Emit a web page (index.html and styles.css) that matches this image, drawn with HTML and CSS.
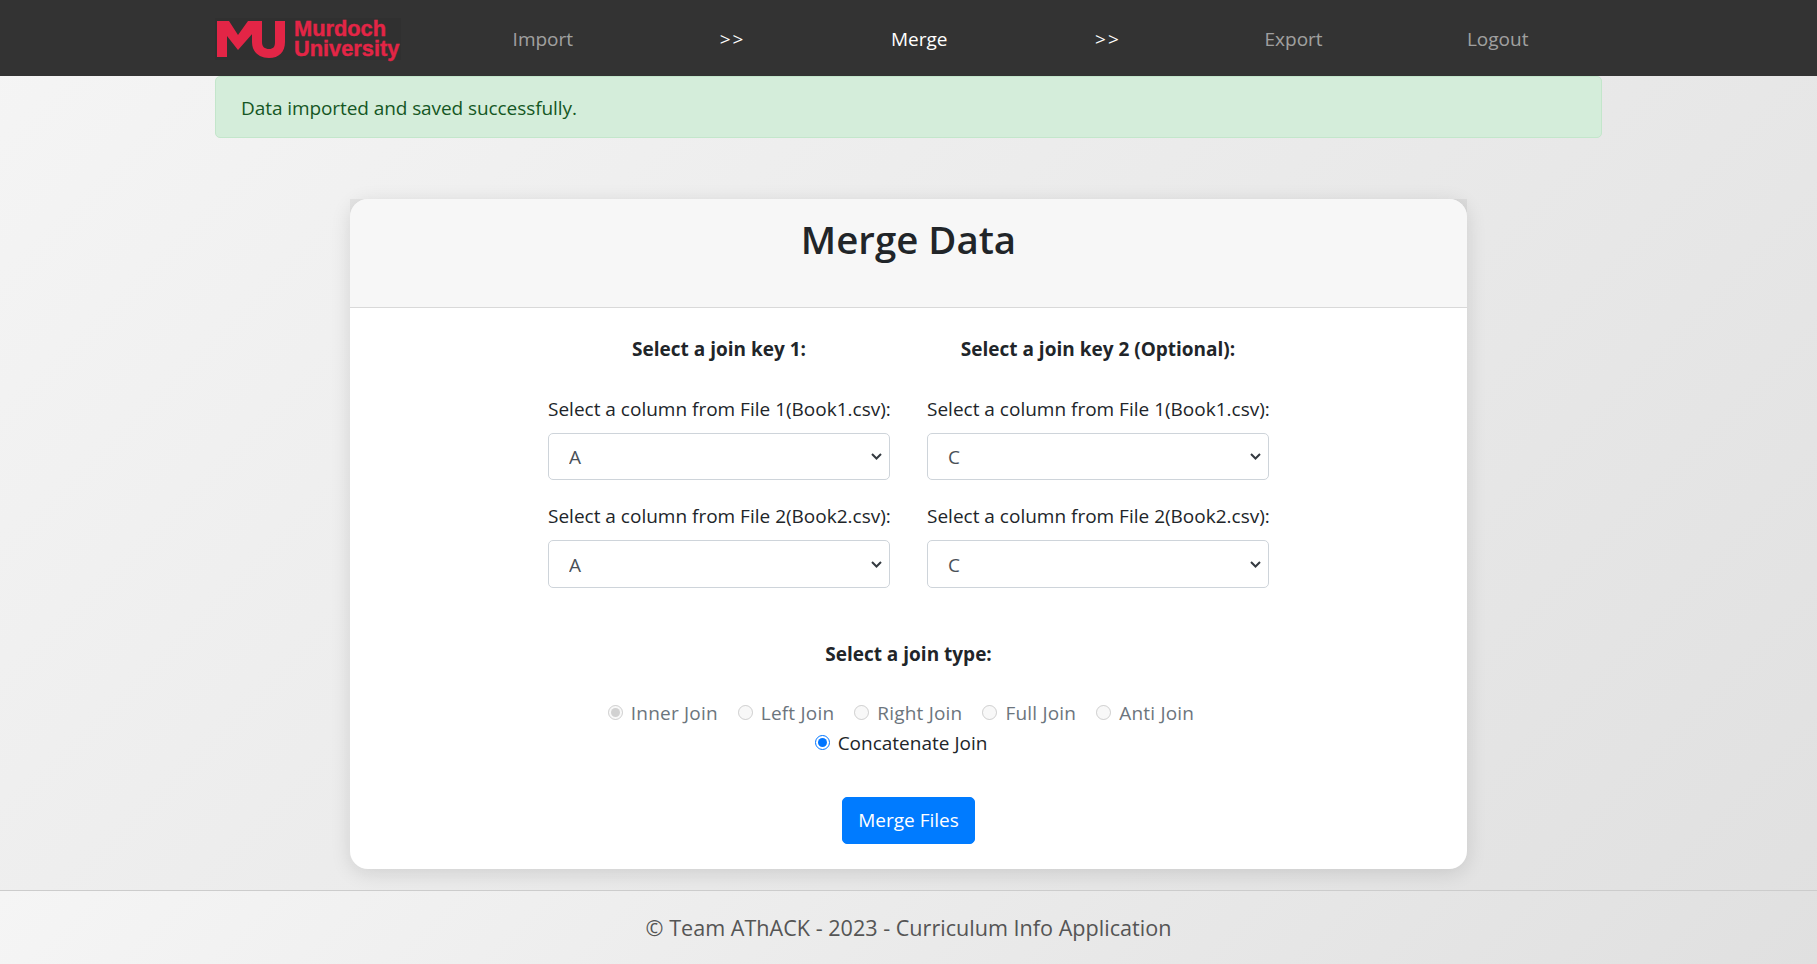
FILE: index.html
```html
<!DOCTYPE html>
<html lang="en">
  <head>
    <meta charset="UTF-8" />
    <title>Merge Data</title>
    <link rel="stylesheet" href="styles.css">
  </head>
  <body>
    <nav class="navbar">
      <div class="nav-inner">
        <div class="brand-cell">
          <a class="brand" href="#">
            <svg class="brand-mark" viewBox="0 0 68 37" aria-hidden="true">
              <path d="M0 0H12L21 14L31 0H36V12L21 29L10 15V36H0Z" />
              <path d="M35 0H45V21C45 26 48 28 52 28C56 28 58 26 58 21V0H68V21C68 31 62 37 52 37C42 37 35 31 35 21Z" />
            </svg>
            <span class="brand-text">Murdoch<br />University</span>
          </a>
        </div>
        <ul class="nav-links">
          <li><a href="#">Import</a></li>
          <li class="sep">&gt;&gt;</li>
          <li class="current"><a class="active" href="#">Merge</a></li>
          <li class="sep">&gt;&gt;</li>
          <li><a href="#">Export</a></li>
          <li class="logout"><a href="#">Logout</a></li>
        </ul>
      </div>
    </nav>

    <main class="content">
      <div class="alert">Data imported and saved successfully.</div>

      <section class="card">
        <div class="card-top">
          <div class="card-header">
            <h1>Merge Data</h1>
          </div>
        </div>
        <form class="card-body">
          <div class="key-row">
            <div class="key-col">
              <h2>Select a join key 1:</h2>
              <label for="k1a">Select a column from File 1(Book1.csv):</label>
              <select id="k1a" class="form-select"><option>A</option></select>
              <label for="k1b">Select a column from File 2(Book2.csv):</label>
              <select id="k1b" class="form-select last"><option>A</option></select>
            </div>
            <div class="key-col">
              <h2>Select a join key 2 (Optional):</h2>
              <label for="k2a">Select a column from File 1(Book1.csv):</label>
              <select id="k2a" class="form-select"><option>C</option></select>
              <label for="k2b">Select a column from File 2(Book2.csv):</label>
              <select id="k2b" class="form-select last"><option>C</option></select>
            </div>
          </div>

          <h2 class="type-title">Select a join type:</h2>
          <div class="join-types">
            <label class="radio disabled"><input type="radio" name="jt" checked disabled />Inner Join</label>
            <label class="radio disabled"><input type="radio" disabled />Left Join</label>
            <label class="radio disabled"><input type="radio" disabled />Right Join</label>
            <label class="radio disabled"><input type="radio" disabled />Full Join</label>
            <label class="radio disabled"><input type="radio" disabled />Anti Join</label>
            <label class="radio"><input type="radio" name="jt2" checked />Concatenate Join</label>
          </div>

          <button class="btn" type="button">Merge Files</button>
        </form>
      </section>
    </main>

    <footer class="footer">© Team AThACK - 2023 - Curriculum Info Application</footer>
  </body>
</html>
```

FILE: styles.css
```css
* {
  box-sizing: border-box;
}
body {
  margin: 0;
  height: 964px;
  overflow: hidden;
  display: flex;
  flex-direction: column;
  font-family: "Open Sans", "Noto Sans", sans-serif;
  font-size: 19px;
  line-height: 1.5;
  color: #212529;
  background: linear-gradient(135deg, #f5f5f5, #e0e0e0);
}
.navbar {
  height: 76px;
  flex: none;
  background: #333;
}
.nav-inner {
  width: 1387px;
  height: 100%;
  margin: 0 auto;
  display: flex;
  align-items: center;
}
.brand-cell {
  flex: none;
  display: flex;
  width: 234px;
  padding-top: 2px;
}
.brand {
  display: flex;
  align-items: center;
  gap: 9px;
  height: 42px;
  padding: 0 2px;
  background: #303030;
  text-decoration: none;
  color: #e32546;
}
.brand-mark {
  width: 68px;
  height: 37px;
  fill: #e32546;
}
.brand-text {
  font-family: "Liberation Sans", sans-serif;
  font-weight: 700;
  font-size: 21.8px;
  line-height: 20px;
  -webkit-text-stroke: 0.4px #e32546;
}
.nav-links {
  flex: 1;
  display: flex;
  align-items: center;
  margin: 0;
  padding: 2px 0 0;
  list-style: none;
}
.nav-links li {
  flex: 0 0 187.7px;
  text-align: center;
  color: #fff;
}
.nav-links .sep {
  padding-left: 4px;
  letter-spacing: 2px;
}
.nav-links .current {
  padding-left: 2px;
}
.nav-links .logout {
  flex: 1;
  padding-left: 6px;
}
.nav-links a {
  color: rgba(255, 255, 255, 0.55);
  text-decoration: none;
}
.nav-links a.active {
  color: #fff;
}
.content {
  flex: 1;
}
.alert {
  width: 1387px;
  height: 62px;
  margin: 0 auto;
  padding: 17px 25px;
  background: #d4edda;
  border: 1px solid #c3e6cb;
  border-radius: 5px;
  color: #155724;
  letter-spacing: -0.08px;
}
.card {
  width: 1117px;
  margin: 61px auto 0;
  background: #fff;
  border-radius: 18px;
  box-shadow: 0 4px 20px rgba(0, 0, 0, 0.12);
}
.card-top {
  background: rgba(0, 0, 0, 0.05);
}
.card-header {
  height: 109px;
  padding-top: 17px;
  background: #f7f7f7;
  border-bottom: 1px solid #d9d9d9;
  border-radius: 18px 18px 0 0;
  text-align: center;
}
h1 {
  margin: 0;
  font-size: 38.4px;
  font-weight: 600;
  line-height: 1.2;
}
h2 {
  margin: 0;
  font-size: 19px;
  font-weight: 700;
  line-height: 28px;
  text-align: center;
}
.card-body {
  padding: 27px 0 25px;
  text-align: center;
}
.key-row {
  display: flex;
  justify-content: center;
  gap: 37px;
}
.key-col {
  width: 342px;
  text-align: left;
}
.key-col h2 {
  margin-bottom: 32px;
}
.key-col label {
  display: block;
  height: 28px;
  margin-bottom: 10px;
  white-space: nowrap;
}
.form-select {
  display: block;
  width: 100%;
  height: 47px;
  margin-bottom: 22px;
  padding: 2px 32px 0 20px;
  font: inherit;
  color: #495057;
  appearance: none;
  background: #fff url("data:image/svg+xml,%3Csvg xmlns='http://www.w3.org/2000/svg' width='11' height='7' viewBox='0 0 11 7'%3E%3Cpath d='M1 1l4.5 4.5L10 1' fill='none' stroke='%23343a40' stroke-width='2'/%3E%3C/svg%3E") no-repeat right 7px center;
  border: 1px solid #ced4da;
  border-radius: 5px;
}
.form-select.last {
  height: 48px;
  margin-bottom: 0;
}
.type-title {
  margin-top: 52px;
}
.join-types {
  width: 640px;
  margin: 31px auto 0;
  padding-right: 15px;
  display: flex;
  flex-wrap: wrap;
  justify-content: center;
  column-gap: 20px;
  row-gap: 2px;
}
.radio {
  display: inline-flex;
  align-items: center;
  gap: 8px;
  height: 28px;
}
.radio input {
  width: 15px;
  height: 15px;
  margin: 0 0 2px;
}
.radio.disabled {
  color: #6c757d;
  letter-spacing: 0.2px;
}
.btn {
  display: block;
  margin: 40px auto 0;
  width: 133px;
  height: 47px;
  font: inherit;
  color: #fff;
  background: #007bff;
  border: 1px solid #007bff;
  border-radius: 5px;
}
.footer {
  flex: none;
  height: 74px;
  padding-top: 2px;
  display: flex;
  align-items: center;
  justify-content: center;
  border-top: 1px solid #ccc;
  font-size: 21.6px;
  color: #555;
  background: linear-gradient(135deg, #f5f5f5, #e0e0e0);
}
```
